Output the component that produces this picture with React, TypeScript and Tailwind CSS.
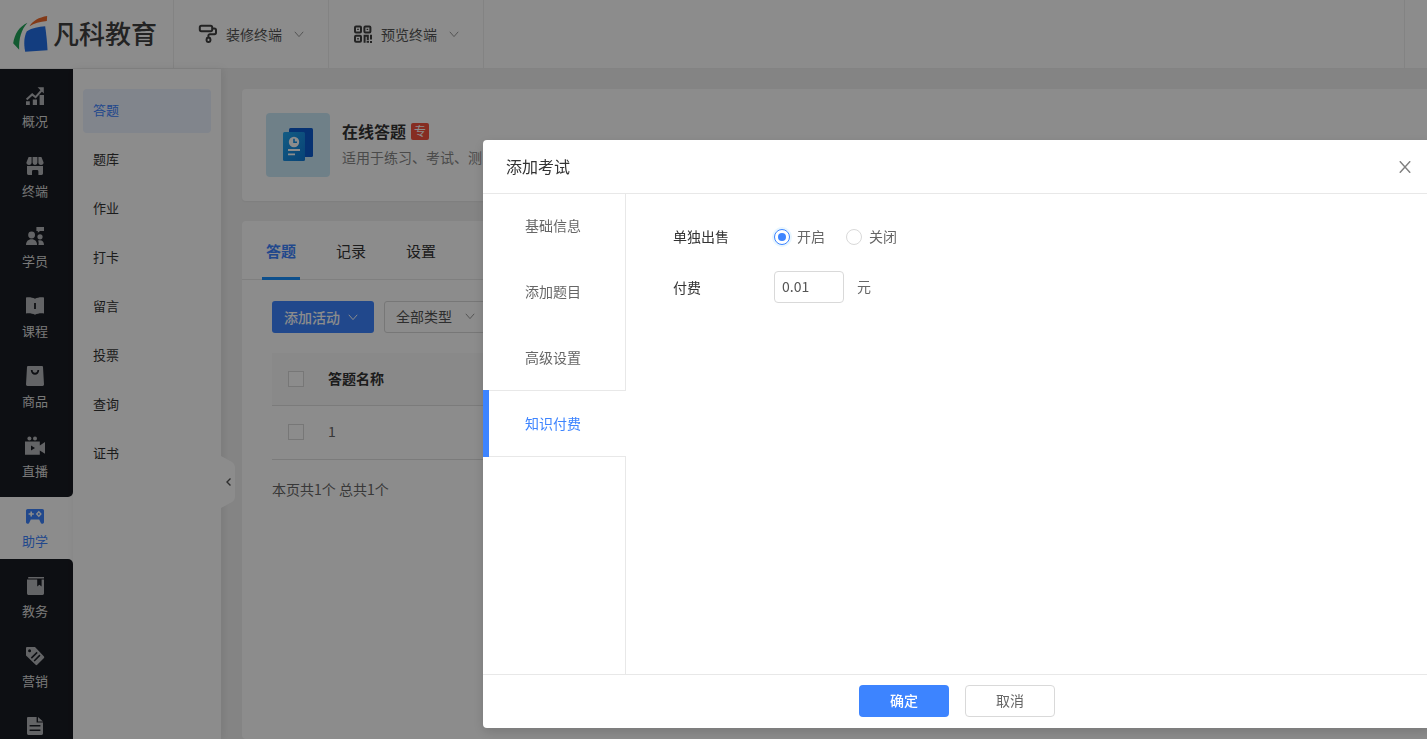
import React, { useState } from "react";
import clsx from "clsx";

const ICONS: Record<string, React.ReactNode> = {
  overview: (
    <>
      <path d="M0.6 12.6L6.2 7.4L9.6 10.2L16 3" fill="none" stroke="currentColor" strokeWidth="2" />
      <path d="M11.6 0.2H17.8V6.4L15.8 4.4L13.6 2.2ZM0 14.2H3.8V18H0ZM6.8 12.4H11V18H6.8ZM13.6 8H18V18H13.6Z" />
    </>
  ),
  terminal: (
    <>
      <path d="M2.6 0H5.6V5.6A2.6 2.4 0 0 1 0.4 5.6ZM6.6 0H11.4V5.6A2.4 2.4 0 0 1 6.6 5.6ZM12.4 0H15.4L17.6 5.6A2.6 2.4 0 0 1 12.4 5.6Z" />
      <path d="M1 9H17V16.6A1.4 1.4 0 0 1 15.6 18H12.4V14.4A1.4 1.4 0 0 0 11 13H7.4A1.4 1.4 0 0 0 6 14.4V18H2.4A1.4 1.4 0 0 1 1 16.6Z" />
    </>
  ),
  student: (
    <>
      <circle cx="5.6" cy="8" r="3.4" />
      <path d="M0 18C0 14.4 2 12.2 5.6 12.2S11 14.4 11 18Z" />
      <circle cx="14" cy="9.8" r="2.6" />
      <path d="M12.4 18H18C18 15 16.6 13.2 13.6 13.2L12 13.6C12.8 15 12.8 16.4 12.4 18ZM10.4 0H18V4H14L11.8 5.8V4H10.4Z" />
    </>
  ),
  course: (
    <path
      fillRule="evenodd"
      d="M0 0.4C3.6 0 6.4 0.4 9 1.8C11.6 0.4 14.4 0 18 0.4V16.4C14.4 16 11.6 16.4 9 17.8C6.4 16.4 3.6 16 0 16.4ZM8.1 6V12H9.9V6Z"
    />
  ),
  goods: (
    <path
      fillRule="evenodd"
      d="M2 -1H16A1 1 0 0 1 17 0L18 17.6A1.4 1.4 0 0 1 16.6 19H1.4A1.4 1.4 0 0 1 0 17.6L1 0A1 1 0 0 1 2 -1ZM4.8 3A4.2 4.8 0 0 0 13.2 3H11.4A2.4 2.8 0 0 1 6.6 3Z"
    />
  ),
  live: (
    <>
      <circle cx="3.4" cy="1.6" r="2" />
      <circle cx="9" cy="1.6" r="2" />
      <path fillRule="evenodd" d="M-1 4.6H13.8V8.4L19 5V16.8L13.8 13.4V17.8H-1ZM5 8.4V13.6L9 11Z" />
    </>
  ),
  study: (
    <path
      fillRule="evenodd"
      d="M1.6 2H16.4A1.6 1.6 0 0 1 18 3.6V14.6A1.6 1.6 0 0 1 14.6 15.4L13.2 12.6H4.8L3.4 15.4A1.6 1.6 0 0 1 0 14.6V3.6A1.6 1.6 0 0 1 1.6 2ZM4.4 4.4V6.2H2.6V7.8H4.4V9.6H6V7.8H7.8V6.2H6V4.4ZM12.8 3.8L9.8 7L12.8 10.2L15.8 7ZM12.8 5.8L14 7L12.8 8.2L11.6 7Z"
    />
  ),
  academic: (
    <>
      <path d="M2.2 0H18V1.6H2.2Z" />
      <path d="M1 2.4H11.2V9.6L13.4 7.8L15.6 9.6V2.4H18V16.6A1.4 1.4 0 0 1 16.6 18H2.4A1.4 1.4 0 0 1 1 16.6Z" />
    </>
  ),
  marketing: (
    <path
      fillRule="evenodd"
      d="M1 0H9L18 9.4A1.4 1.4 0 0 1 18 11L11.2 17.8A1.2 1.2 0 0 1 9.6 17.8L0 8.6V1A1 1 0 0 1 1 0ZM3.6 2.2A1.5 1.5 0 1 0 3.6 5.2A1.5 1.5 0 1 0 3.6 2.2ZM10.6 4.8L4.8 10.6L5.9 11.7L11.7 5.9ZM13.4 7.6L7.6 13.4L8.7 14.5L14.5 8.7Z"
    />
  ),
  report: (
    <path
      fillRule="evenodd"
      d="M2 0H10.6V5.6H17V16.6A1.4 1.4 0 0 1 15.6 18H2.4A1.4 1.4 0 0 1 1 16.6V1A1 1 0 0 1 2 0ZM12 0L17 4.4H12ZM3.6 8V9.6H14.4V8ZM3.6 12.4V14H14.4V12.4Z"
    />
  ),
};

const NAV_TOP = [
  { icon: "overview", label: "概况" },
  { icon: "terminal", label: "终端" },
  { icon: "student", label: "学员" },
  { icon: "course", label: "课程" },
  { icon: "goods", label: "商品" },
  { icon: "live", label: "直播" },
];

const NAV_BOTTOM = [
  { icon: "academic", label: "教务" },
  { icon: "marketing", label: "营销" },
  { icon: "report", label: "" },
];

const SUB_MENU = ["答题", "题库", "作业", "打卡", "留言", "投票", "查询", "证书"];
const PAGE_TABS = ["答题", "记录", "设置"];
const STEPS = ["基础信息", "添加题目", "高级设置", "知识付费"];

function Chevron({ className }: { className?: string }) {
  return (
    <svg viewBox="0 0 10 10" className={clsx("h-[10px] w-[10px]", className)} fill="none" stroke="currentColor">
      <path d="M0.8 2.8L5 7.6L9.2 2.8" />
    </svg>
  );
}

function Logo() {
  return (
    <a href="#" className="flex w-[174px] items-center gap-1 border-r border-[#eee] pl-3">
      <svg viewBox="36 44 110 114" className="h-[38px] w-[37px] shrink-0">
        <path d="M82 67C58 78 43 100 39 129L57 148C56 114 63 88 82 67Z" fill="#22a559" />
        <path d="M88 78C98 61 116 51 141 47L140 62C119 64 102 69 88 78Z" fill="#ee6a2c" />
        <path d="M75 154C70 130 72 108 80 93C96 83 115 79 135 78C138 100 141 124 142 150Z" fill="#2470e8" />
      </svg>
      <span className="pb-1 text-[26px] font-medium whitespace-nowrap text-[#404040]">凡科教育</span>
    </a>
  );
}

function Header() {
  return (
    <header className="flex h-[69px] shrink-0 border-b border-[#eee] bg-white">
      <Logo />
      <button type="button" className="flex w-[155px] items-center border-r border-[#eee] pl-6 text-sm text-[#555]">
        <svg viewBox="0 0 20 20" className="mr-2 h-5 w-5" fill="none" stroke="#404040" strokeWidth="2">
          <rect x="1.8" y="1.8" width="12.4" height="5.4" rx="1.6" />
          <path d="M14.4 4.4H16.4A1.6 1.6 0 0 1 18 6V8.6A1.6 1.6 0 0 1 16.4 10.2H11.8A1.4 1.4 0 0 0 10.4 11.6V13.4" />
          <rect x="8.6" y="13.8" width="3.8" height="4.2" rx="1.4" />
        </svg>
        装修终端
        <Chevron className="ml-3 text-[#999]" />
      </button>
      <button type="button" className="flex w-[155px] items-center border-r border-[#eee] pl-6 text-sm text-[#555]">
        <svg viewBox="0 0 20 20" className="mr-2 h-5 w-5" fill="none" stroke="#404040" strokeWidth="2">
          <rect x="2" y="2.4" width="6" height="6" rx="1" />
          <rect x="11.4" y="2.4" width="6" height="6" rx="1" />
          <rect x="2" y="11.8" width="6" height="6" rx="1" />
          <path d="M11.6 18.8V11.8H14.8V16M18 10.8V15.4M18 17V19M13.6 17.8H16" />
          <path d="M4.2 5.4H5.8M13.6 5.4H15.2M4.2 14.8H5.8" strokeWidth="1.4" />
        </svg>
        预览终端
        <Chevron className="ml-3 text-[#999]" />
      </button>
      <div className="ml-auto w-[23px] border-l border-[#eee]" />
    </header>
  );
}

function NavItem({ icon, label, active }: { icon: string; label: string; active?: boolean }) {
  return (
    <a
      href="#"
      className={clsx(
        "flex h-[62px] shrink-0 flex-col items-center gap-[7px] pt-[9px] pr-[3px] text-[13px] leading-4",
        active ? "bg-white text-[#3d84ff]" : "text-[#dcdcdc]"
      )}
    >
      <svg
        viewBox="-1 -1 20 20"
        className={clsx("h-5 w-5 shrink-0", active ? "text-[#3d84ff]" : "text-[#b4b6ba]")}
        fill="currentColor"
      >
        {ICONS[icon]}
      </svg>
      {label}
    </a>
  );
}

function Sidebar() {
  return (
    <nav className="flex w-[73px] shrink-0 flex-col bg-white">
      <div className="flex shrink-0 flex-col gap-2 rounded-br-[5px] bg-[#191c23] pb-2 pt-2">
        {NAV_TOP.map((item) => (
          <NavItem key={item.icon} {...item} />
        ))}
      </div>
      <NavItem icon="study" label="助学" active />
      <div className="flex min-h-0 flex-1 flex-col gap-2 overflow-hidden rounded-tr-[5px] bg-[#191c23] pt-2">
        {NAV_BOTTOM.map((item) => (
          <NavItem key={item.icon} {...item} />
        ))}
      </div>
    </nav>
  );
}

function SubMenu() {
  return (
    <aside className="relative w-[148px] shrink-0 bg-white px-[10px] pt-5 shadow-[2px_0_8px_rgba(0,0,0,0.08)]">
      <ul className="flex flex-col gap-[5px]">
        {SUB_MENU.map((name, i) => (
          <li key={name}>
            <a
              href="#"
              className={clsx(
                "flex h-11 items-center rounded-[4px] px-[10px] pb-[2px] text-[13px]",
                i === 0 ? "bg-[#ebf2ff] text-[#3d84ff]" : "text-[#333]"
              )}
            >
              {name}
            </a>
          </li>
        ))}
      </ul>
      <button type="button" aria-label="收起" className="absolute left-full top-[387px] h-[52px] w-[14px]">
        <svg viewBox="0 0 14 52" className="h-[52px] w-[14px]" fill="none">
          <path d="M0 0L11 6Q14 8 14 11V41Q14 44 11 46L0 52Z" fill="#fff" />
          <path d="M9.5 22.5L6 26L9.5 29.5" stroke="#555" strokeWidth="1.4" />
        </svg>
      </button>
    </aside>
  );
}

function AppCard() {
  return (
    <section className="flex gap-3 rounded-l-[4px] bg-white p-6 shadow-xs">
      <div className="flex h-16 w-16 shrink-0 items-center justify-center rounded-[4px] bg-[#cbe9f8]">
        <svg viewBox="0 0 32 34" className="h-[34px] w-8">
          <defs>
            <linearGradient id="paper" x1="0" y1="0" x2="1" y2="1">
              <stop offset="0" stopColor="#22a8f0" />
              <stop offset="1" stopColor="#0f7ad8" />
            </linearGradient>
          </defs>
          <rect x="7" y="0" width="24" height="29" rx="1.5" fill="#0b5ccf" />
          <rect x="1" y="4" width="22" height="29" rx="1.5" fill="url(#paper)" />
          <circle cx="12" cy="14" r="5.2" fill="#fff" />
          <path d="M12 10.8V14.2H15" fill="none" stroke="#1390e8" strokeWidth="1.6" />
          <path d="M6 22H18M6 26.4H13" stroke="#fff" strokeWidth="1.9" />
        </svg>
      </div>
      <div className="flex flex-col gap-1 pt-[6px]">
        <h1 className="flex items-center gap-[5px] text-base font-bold text-[#333]">
          在线答题
          <span className="flex h-[17px] w-[18px] items-center justify-center rounded-[2px] bg-[#f5523f] text-xs font-normal text-white">
            专
          </span>
        </h1>
        <p className="text-sm text-[#888]">适用于练习、考试、测</p>
      </div>
    </section>
  );
}

function Checkbox({ label }: { label: string }) {
  return (
    <input
      type="checkbox"
      aria-label={label}
      className="block h-4 w-4 appearance-none border border-[#d9d9d9] bg-white checked:bg-[#3d84ff]"
    />
  );
}

function ActivityPanel() {
  return (
    <section className="flex-1 rounded-l-[4px] bg-white">
      <div className="flex h-[59px] gap-8 border-b border-[#e8e8e8] pl-5">
        {PAGE_TABS.map((tab, i) => (
          <button
            key={tab}
            type="button"
            className={clsx(
              "h-[59px] border-b-[3px] px-1 pt-1 text-[15px]",
              i === 0 ? "border-[#1890ff] font-bold text-[#3d84ff]" : "border-transparent text-[#333]"
            )}
          >
            {tab}
          </button>
        ))}
      </div>
      <div className="pl-[30px] pt-[21px]">
        <div className="flex gap-[10px]">
          <button
            type="button"
            className="flex h-8 w-[102px] items-center gap-2 rounded-[3px] bg-[#3d84ff] pb-px pl-3 text-sm font-medium text-white"
          >
            添加活动
            <Chevron />
          </button>
          <div className="relative">
            <select
              aria-label="类型"
              className="h-8 w-[102px] appearance-none rounded-[3px] border border-[#d9d9d9] bg-white pb-[2px] pl-[11px] text-sm text-[#555]"
            >
              <option>全部类型</option>
            </select>
            <Chevron className="pointer-events-none absolute right-[11px] top-[10px] text-[#999]" />
          </div>
        </div>
        <table className="mt-5 w-full text-left text-sm">
          <thead>
            <tr className="h-[52px] border-b border-[#e0e0e0] bg-[#fafafa]">
              <th className="w-14 pl-4">
                <Checkbox label="全选" />
              </th>
              <th className="pb-[2px] font-bold text-[#333]">答题名称</th>
            </tr>
          </thead>
          <tbody>
            <tr className="h-[54px] border-b border-[#e0e0e0]">
              <td className="pl-4">
                <Checkbox label="选择 1" />
              </td>
              <td className="pb-[2px] text-[#666]">1</td>
            </tr>
          </tbody>
        </table>
        <p className="mt-[19px] text-sm text-[#666]">本页共1个 总共1个</p>
      </div>
    </section>
  );
}

interface RadioProps {
  label: string;
  checked: boolean;
  onChange: () => void;
}

function Radio({ label, checked, onChange }: RadioProps) {
  return (
    <label className="flex items-center gap-[7px]">
      <input
        type="radio"
        name="sale"
        checked={checked}
        onChange={onChange}
        className="grid h-4 w-4 appearance-none place-content-center rounded-full border border-[#d9d9d9] bg-white before:h-2 before:w-2 before:rounded-full checked:border-[#3d84ff] checked:shadow-[0_0_0_2px_#e8f6ff] checked:before:bg-[#3d84ff]"
      />
      <span className="pb-[2px]">{label}</span>
    </label>
  );
}

function ExamDialog() {
  const [step, setStep] = useState("知识付费");
  const [open, setOpen] = useState(true);
  const [price, setPrice] = useState("0.01");

  return (
    <div
      role="dialog"
      aria-label="添加考试"
      className="-mr-1 flex flex-1 flex-col rounded-[4px] bg-white shadow-[0_4px_12px_rgba(0,0,0,0.15)]"
    >
      <div className="flex h-[54px] items-center justify-between border-b border-[#e8e8e8] pl-[23px] pr-5">
        <h2 className="pb-[2px] text-base text-[#333]">添加考试</h2>
        <button type="button" aria-label="关闭窗口" className="text-[#808080]">
          <svg viewBox="0 0 12 12" className="h-3 w-3" fill="none" stroke="currentColor" strokeWidth="1.4">
            <path d="M0.8 0.2L11.2 11.8M11.2 0.2L0.8 11.8" />
          </svg>
        </button>
      </div>

      <div className="flex min-h-[480px]">
        <div className="flex w-[143px] shrink-0 flex-col">
          <ul className="-mt-px">
            {STEPS.map((name) => (
              <li key={name}>
                <button
                  type="button"
                  onClick={() => setStep(name)}
                  className={clsx(
                    "flex w-full items-center border-l-6 pb-[2px] pl-9 text-sm",
                    name === step
                      ? "-mt-px h-[67px] border-l-[#3d84ff] text-[#3d84ff] shadow-[inset_0_1px_#e8e8e8,inset_0_-1px_#e8e8e8]"
                      : "h-[66px] border-r border-l-transparent border-r-[#e8e8e8] text-[#666]"
                  )}
                >
                  {name}
                </button>
              </li>
            ))}
          </ul>
          <div className="flex-1 border-r border-[#e8e8e8]" />
        </div>

        <form className="flex flex-col gap-[18px] pl-[47px] pt-[27px] text-sm text-[#666]">
          <div className="flex h-8 items-center">
            <span className="w-[101px] pb-[2px] text-[#333]">单独出售</span>
            <div className="flex gap-[21px]">
              <Radio label="开启" checked={open} onChange={() => setOpen(true)} />
              <Radio label="关闭" checked={!open} onChange={() => setOpen(false)} />
            </div>
          </div>
          <div className="flex h-8 items-center">
            <label htmlFor="price" className="w-[101px] text-[#333]">
              付费
            </label>
            <input
              id="price"
              type="text"
              value={price}
              onChange={(e) => setPrice(e.target.value)}
              className="mr-[13px] h-8 w-[70px] rounded-[4px] border border-[#d9d9d9] px-[7px] pb-[2px] text-[#555] outline-none"
            />
            <span className="pb-[2px]">元</span>
          </div>
        </form>
      </div>

      <div className="flex h-[54px] justify-center gap-4 border-t border-[#e8e8e8] pt-[10px] text-sm">
        <button type="button" className="h-8 w-[90px] rounded-[4px] bg-[#3d84ff] pb-[2px] font-medium text-white">
          确定
        </button>
        <button type="button" className="h-8 w-[90px] rounded-[4px] border border-[#d9d9d9] bg-white pb-[2px] text-[#666]">
          取消
        </button>
      </div>
    </div>
  );
}

export default function App() {
  return (
    <div className="flex h-screen flex-col overflow-hidden bg-[#f1f1f1] font-['Noto_Sans_CJK_SC',sans-serif]">
      <Header />
      <div className="flex min-h-0 flex-1">
        <Sidebar />
        <SubMenu />
        <main className="flex min-w-0 flex-1 flex-col gap-5 pl-[21px] pt-5">
          <AppCard />
          <ActivityPanel />
        </main>
      </div>
      <div className="fixed inset-0 flex items-start overflow-hidden bg-black/45 pl-[483px] pt-[140px]">
        <ExamDialog />
      </div>
    </div>
  );
}
